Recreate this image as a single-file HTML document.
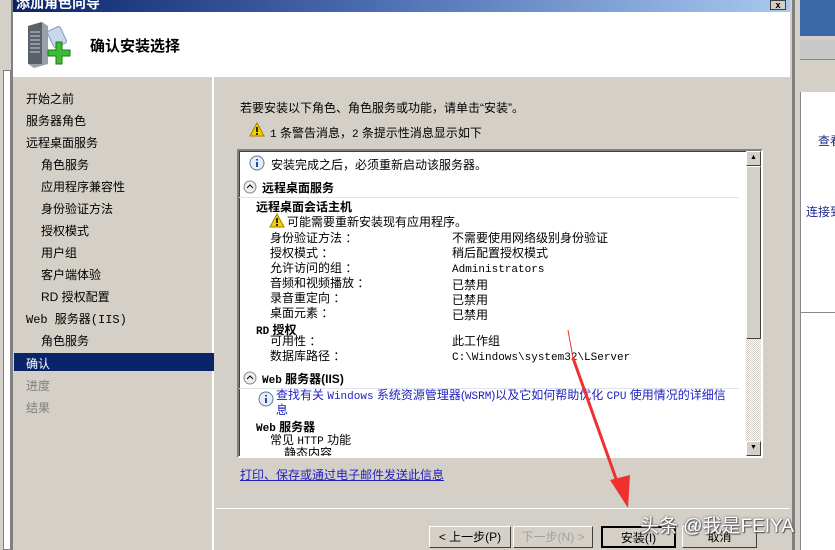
<!DOCTYPE html>
<html><head><meta charset="utf-8"><style>
*{margin:0;padding:0;box-sizing:border-box}
body{width:835px;height:550px;overflow:hidden;background:#d4d0c8;position:relative;font-family:"Liberation Sans","Noto Sans CJK SC",sans-serif;font-size:12px;color:#000}
.a{position:absolute;white-space:nowrap}
.nav div{position:absolute;left:26px;font-size:12px}
.m{font-family:"Liberation Mono","Noto Sans CJK SC",monospace;font-size:11px}
.btn{position:absolute;top:526px;height:22px;background:#d4d0c8;border:1px solid;border-color:#fff #404040 #404040 #fff;text-align:center;line-height:20px;font-size:12px}
</style></head><body>
<div class="a" style="left:0;top:0;width:13px;height:550px;background:#d4d0c8;border-right:2px solid #808080"></div>
<div class="a" style="left:3px;top:70px;width:8px;height:480px;border:1px solid #808080;background:#fff"></div>
<div class="a" style="left:790px;top:0;width:45px;height:550px;background:#d4d0c8"></div>
<div class="a" style="left:800px;top:0;width:35px;height:36px;background:#3a68a8"></div>
<div class="a" style="left:800px;top:40px;width:35px;height:20px;background:#c8c8c8;border-bottom:1px solid #888"></div>
<div class="a" style="left:800px;top:92px;width:35px;height:458px;background:#fff;border-left:1px solid #888"></div>
<div class="a" style="left:800px;top:312px;width:35px;height:1px;background:#888"></div>
<div class="a" style="left:818px;top:132px;color:#1a2a8a;font-size:12px">查看</div>
<div class="a" style="left:806px;top:203px;color:#1a2a8a;font-size:12px">连接到</div>
<div class="a" style="left:792px;top:0;width:3px;height:550px;background:#808080"></div>
<div class="a" style="left:13px;top:0;width:777px;height:12px;background:linear-gradient(90deg,#0a246a,#4a6ab0 45%,#a6caf0);overflow:hidden"><span style="position:absolute;left:3px;top:-7px;color:#fff;font-weight:bold;font-size:14px">添加角色向导</span></div>
<div class="a" style="left:770px;top:0;width:16px;height:10px;background:#d4d0c8;border:1px solid #404040;font-size:9px;text-align:center;line-height:8px;font-weight:bold">x</div>
<div class="a" style="left:13px;top:12px;width:777px;height:65px;background:#fff"></div>
<svg class="a" style="left:24px;top:18px" width="48" height="52" viewBox="0 0 48 52">
<path d="M4 8 L18 4 L24 8 L24 46 L10 50 L4 46Z" fill="#9aa0a8"/><path d="M4 8 L18 4 L18 46 L4 46Z" fill="#5a6068"/>
<path d="M6 14h10M6 18h10M6 22h10M6 26h10M6 30h10M6 34h10" stroke="#ccd" stroke-width="1"/>
<rect x="26" y="10" width="14" height="18" rx="2" fill="#c8d8ec" stroke="#8098b8" transform="rotate(-25 33 19)"/>
<path d="M28 32h8v-8h6v8h8v6h-8v8h-6v-8h-8z" fill="#3cbc30" stroke="#1c7a18" transform="translate(-4 0)"/>
</svg>
<div class="a" style="left:90px;top:35px;font-size:15px;font-weight:bold">确认安装选择</div>
<div class="a" style="left:13px;top:77px;width:201px;height:473px;background:#d4d0c8;border-right:2px solid #fff"></div>
<div class="nav">
<div style="top:90px">开始之前</div>
<div style="top:112px">服务器角色</div>
<div style="top:134px">远程桌面服务</div>
<div style="top:156px;left:41px">角色服务</div>
<div style="top:178px;left:41px">应用程序兼容性</div>
<div style="top:200px;left:41px">身份验证方法</div>
<div style="top:222px;left:41px">授权模式</div>
<div style="top:244px;left:41px">用户组</div>
<div style="top:266px;left:41px">客户端体验</div>
<div style="top:288px;left:41px">RD 授权配置</div>
<div style="top:310px" class="m">Web 服务器(IIS)</div>
<div style="top:332px;left:41px">角色服务</div>
</div>
<div class="a" style="left:14px;top:353px;width:200px;height:18px;background:#0a246a"></div>
<div class="a" style="left:26px;top:355px;color:#fff">确认</div>
<div class="a" style="left:26px;top:377px;color:#808080">进度</div>
<div class="a" style="left:26px;top:399px;color:#808080">结果</div>
<div class="a" style="left:240px;top:99px">若要安装以下角色、角色服务或功能，请单击“安装”。</div>
<svg class="a" style="left:249px;top:122px" width="16" height="15"><path d="M8 1 L15 14 H1Z" fill="#f4d000" stroke="#a08000"/><path d="M8 5v5M8 11v2" stroke="#000" stroke-width="1.6"/></svg>
<div class="a" style="left:270px;top:124px"><span class="m">1</span> 条警告消息，<span class="m">2</span> 条提示性消息显示如下</div>
<div class="a" style="left:237px;top:149px;width:526px;height:309px;background:#fff;border:2px solid;border-color:#808080 #fff #fff #808080;box-shadow:inset 1px 1px 0 #404040"></div>
<div class="a" style="left:746px;top:151px;width:15px;height:305px;background:repeating-conic-gradient(#d4d0c8 0 25%,#fff 0 50%) 0 0/2px 2px"></div>
<div class="a btn" style="left:746px;top:151px;width:15px;height:15px;font-size:7px;line-height:12px">▲</div>
<div class="a btn" style="left:746px;top:166px;width:15px;height:173px"></div>
<div class="a btn" style="left:746px;top:441px;width:15px;height:15px;font-size:7px;line-height:12px">▼</div>
<div class="a" style="left:239px;top:151px;width:507px;height:305px;overflow:hidden">
<svg class="a" style="left:10px;top:4px" width="16" height="16"><circle cx="8" cy="8" r="7" fill="#e8eef8" stroke="#607890"/><path d="M8 7v5M8 4v1.5" stroke="#2050a0" stroke-width="2"/></svg>
<div class="a" style="left:32px;top:5px">安装完成之后，必须重新启动该服务器。</div>
<svg class="a" style="left:4px;top:29px" width="14" height="14"><circle cx="7" cy="7" r="6" fill="#f0f0f0" stroke="#888"/><path d="M4 8l3-3 3 3" stroke="#000" fill="none"/></svg>
<div class="a" style="left:23px;top:28px;font-weight:bold">远程桌面服务</div>
<div class="a" style="left:0;top:46px;width:500px;height:1px;background:#dde4ee"></div>
<div class="a" style="left:17px;top:47px;font-weight:bold">远程桌面会话主机</div>
<svg class="a" style="left:30px;top:62px" width="16" height="15"><path d="M8 1 L15 14 H1Z" fill="#f4d000" stroke="#a08000"/><path d="M8 5v5M8 11v2" stroke="#000" stroke-width="1.6"/></svg>
<div class="a" style="left:48px;top:62px">可能需要重新安装现有应用程序。</div>
<div class="a" style="left:31px;top:80px;line-height:15px">身份验证方法 ：<br>授权模式 ：<br>允许访问的组 ：<br>音频和视频播放 ：<br>录音重定向 ：<br>桌面元素 ：</div>
<div class="a" style="left:213px;top:80px;line-height:15px">不需要使用网络级别身份验证<br>稍后配置授权模式<br><span class="m">Administrators</span><br>已禁用<br>已禁用<br>已禁用</div>
<div class="a" style="left:17px;top:170px;font-weight:bold"><span class="m" style="font-weight:bold">RD</span> 授权</div>
<div class="a" style="left:31px;top:183px;line-height:15px">可用性 ：<br>数据库路径 ：</div>
<div class="a" style="left:213px;top:183px;line-height:15px">此工作组<br><span class="m">C:\Windows\system32\LServer</span></div>
<svg class="a" style="left:4px;top:220px" width="14" height="14"><circle cx="7" cy="7" r="6" fill="#f0f0f0" stroke="#888"/><path d="M4 8l3-3 3 3" stroke="#000" fill="none"/></svg>
<div class="a" style="left:23px;top:219px;font-weight:bold"><span class="m" style="font-weight:bold">Web</span> 服务器(IIS)</div>
<div class="a" style="left:0;top:237px;width:500px;height:1px;background:#dde4ee"></div>
<svg class="a" style="left:19px;top:240px" width="16" height="16"><circle cx="8" cy="8" r="7" fill="#e8eef8" stroke="#607890"/><path d="M8 7v5M8 4v1.5" stroke="#2050a0" stroke-width="2"/></svg>
<div class="a" style="left:37px;top:238px;color:#2020c0;line-height:13px">查找有关 <span class="m">Windows</span> 系统资源管理器(<span class="m">WSRM</span>)以及它如何帮助优化 <span class="m">CPU</span> 使用情况的详细信<br>息</div>
<div class="a" style="left:17px;top:267px;font-weight:bold"><span class="m" style="font-weight:bold">Web</span> 服务器</div>
<div class="a" style="left:31px;top:280px">常见 <span class="m">HTTP</span> 功能</div>
<div class="a" style="left:45px;top:293px">静态内容</div>
</div>
<div class="a" style="left:240px;top:466px;color:#2020c0;text-decoration:underline">打印、保存或通过电子邮件发送此信息</div>
<div class="a" style="left:216px;top:508px;width:574px;height:1px;background:#808080;border-bottom:1px solid #fff"></div>
<div class="btn" style="left:429px;width:82px">&lt; 上一步(P)</div>
<div class="btn" style="left:513px;width:80px;color:#a0a0a0">下一步(N) &gt;</div>
<div class="btn" style="left:601px;width:75px;border:2px solid #000">安装(I)</div>
<div class="btn" style="left:682px;width:75px">取消</div>
<svg class="a" style="left:560px;top:330px" width="80" height="190"><path d="M13 28 L60 160" stroke="#f03030" stroke-width="3"/><path d="M50 150 L68 178 L70 145Z" fill="#f03030"/><path d="M13 28 L8 0" stroke="#f03030" stroke-width="1"/></svg>
<div class="a" style="left:640px;top:511px;font-size:19px;color:#fff;text-shadow:0 0 2px #555,1px 1px 1px #555">头条 @我是FEIYA</div>
</body></html>
